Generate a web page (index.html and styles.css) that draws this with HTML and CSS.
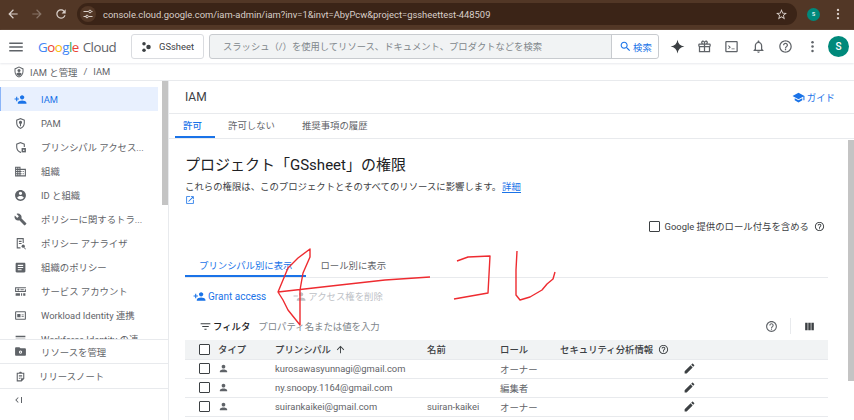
FILE: index.html
```html
<!DOCTYPE html>
<html lang="ja">
<head>
    <meta charset="UTF-8">
    <title>IAM</title>
    <link rel="stylesheet" href="styles.css">
</head>
<body>
    <svg class="sprite" width="0" height="0">
        <symbol id="i-back" viewBox="0 0 24 24"><path d="M20 11H7.83l5.59-5.59L12 4l-8 8 8 8 1.41-1.41L7.83 13H20v-2z"/></symbol>
        <symbol id="i-forward" viewBox="0 0 24 24"><path d="M12 4l-1.41 1.41L16.17 11H4v2h12.17l-5.58 5.59L12 20l8-8z"/></symbol>
        <symbol id="i-refresh" viewBox="0 0 24 24"><path d="M17.65 6.35C16.2 4.9 14.35 4 12 4c-4.42 0-7.99 3.58-7.99 8s3.57 8 7.99 8c3.73 0 6.84-2.55 7.73-6h-2.08c-.82 2.33-3.04 4-5.65 4-3.31 0-6-2.69-6-6s2.69-6 6-6c1.66 0 3.14.69 4.22 1.78L13 11h7V4l-2.35 2.35z"/></symbol>
        <symbol id="i-tune" viewBox="0 0 24 24"><path d="M3 6h10v2H3zM3 16h6v2H3zM13 16h8v2h-8zM19 6h2v2h-2z"/><circle cx="16" cy="7" r="2.6" fill="none" stroke="currentColor" stroke-width="2"/><circle cx="10" cy="17" r="2.6" fill="none" stroke="currentColor" stroke-width="2"/></symbol>
        <symbol id="i-star" viewBox="0 0 24 24"><path d="M22 9.24l-7.19-.62L12 2 9.19 8.63 2 9.24l5.46 4.73L5.82 21 12 17.27 18.18 21l-1.64-7.03L22 9.24zM12 15.4l-3.76 2.27 1-4.28-3.32-2.88 4.38-.38L12 6.1l1.71 4.04 4.38.38-3.32 2.88 1 4.28L12 15.4z"/></symbol>
        <symbol id="i-more" viewBox="0 0 24 24"><circle cx="12" cy="5" r="2"/><circle cx="12" cy="12" r="2"/><circle cx="12" cy="19" r="2"/></symbol>
        <symbol id="i-menu" viewBox="0 0 24 24"><path d="M3 18h18v-2H3v2zm0-5h18v-2H3v2zm0-7v2h18V6H3z"/></symbol>
        <symbol id="i-hub" viewBox="0 0 24 24"><circle cx="8" cy="5.5" r="3.5"/><circle cx="8" cy="18.5" r="3.5"/><circle cx="17" cy="12" r="4.5"/></symbol>
        <symbol id="i-search" viewBox="0 0 24 24"><path d="M15.5 14h-.79l-.28-.27C15.41 12.59 16 11.11 16 9.5 16 5.91 13.09 3 9.5 3S3 5.91 3 9.5 5.91 16 9.5 16c1.61 0 3.09-.59 4.23-1.57l.27.28v.79l5 4.99L20.49 19l-4.99-5zm-6 0C7.01 14 5 11.99 5 9.5S7.01 5 9.5 5 14 7.01 14 9.5 11.99 14 9.5 14z"/></symbol>
        <symbol id="i-spark" viewBox="0 0 24 24"><path d="M12 1c1 6.5 4.5 10 11 11-6.500 1-10 4.500-11 11-1-6.500-4.500-10-11-11 6.500-1 10-4.500 11-11z"/></symbol>
        <symbol id="i-gift" viewBox="0 0 24 24"><path d="M20 7h-3.200c.5-.6.700-1.300.6-2-.2-1.500-1.500-2.500-3-2.500-.9 0-1.800.5-2.400 1.300-.6-.8-1.500-1.300-2.400-1.300-1.500 0-2.800 1-3 2.500-.1.700.1 1.400.6 2H4c-1.100 0-2 .9-2 2v3h1v9h18v-9h1V9c0-1.100-.9-2-2-2zm-6-2.500c.6 0 1.300.4 1.400 1 .1.800-.5 1.500-1.400 1.500h-1V6c0-.9.400-1.500 1-1.500zM8.600 5.500c.1-.6.800-1 1.400-1 .6 0 1 .6 1 1.500v1h-1c-.9 0-1.500-.7-1.400-1.500zM4 9h7v2H4V9zm1 4h6v6H5v-6zm14 6h-6v-6h6v6zm1-8h-7V9h7v2z"/></symbol>
        <symbol id="i-terminal" viewBox="0 0 24 24"><path d="M20 3H4c-1.100 0-2 .9-2 2v14c0 1.100.9 2 2 2h16c1.100 0 2-.9 2-2V5c0-1.100-.9-2-2-2zm0 16H4V5h16v14z"/><path d="M7.500 10l3.500 3-3.500 3-1-1 2.200-2-2.200-2zM12 15h5v1.500h-5z"/></symbol>
        <symbol id="i-bell" viewBox="0 0 24 24"><path d="M12 22c1.100 0 2-.9 2-2h-4c0 1.100.9 2 2 2zm6-6v-5c0-3.070-1.630-5.640-4.500-6.320V4c0-.83-.67-1.500-1.500-1.500s-1.500.67-1.500 1.500v.68C7.640 5.360 6 7.920 6 11v5l-2 2v1h16v-1l-2-2zm-2 1H8v-6c0-2.480 1.510-4.500 4-4.500s4 2.020 4 4.500v6z"/></symbol>
        <symbol id="i-help" viewBox="0 0 24 24"><path d="M11 18h2v-2h-2v2zm1-16C6.480 2 2 6.480 2 12s4.480 10 10 10 10-4.480 10-10S17.520 2 12 2zm0 18c-4.410 0-8-3.590-8-8s3.590-8 8-8 8 3.590 8 8-3.590 8-8 8zm0-14c-2.210 0-4 1.790-4 4h2c0-1.100.9-2 2-2s2 .9 2 2c0 2-3 1.750-3 5h2c0-2.250 3-2.500 3-5 0-2.210-1.790-4-4-4z"/></symbol>
        <symbol id="i-shield" viewBox="0 0 24 24"><path d="M12 1L3 5v6c0 5.550 3.840 10.740 9 12 5.160-1.260 9-6.450 9-12V5l-9-4zm7 10c0 4.520-2.980 8.690-7 9.930-4.020-1.240-7-5.410-7-9.930V6.300l7-3.110 7 3.110V11z"/><circle cx="12" cy="9" r="3"/><path d="M6.500 16c1-2 3.500-3 5.500-3s4.500 1 5.500 3c-1.300 2-3.300 3.400-5.500 4-2.200-.6-4.200-2-5.500-4z"/></symbol>
        <symbol id="i-person-add" viewBox="0 0 24 24"><path d="M15 12c2.210 0 4-1.790 4-4s-1.790-4-4-4-4 1.790-4 4 1.790 4 4 4zm-9-2V7H4v3H1v2h3v3h2v-3h3v-2H6zm9 4c-2.670 0-8 1.340-8 4v2h16v-2c0-2.660-5.330-4-8-4z"/></symbol>
        <symbol id="i-person-remove" viewBox="0 0 24 24"><path d="M15 12c2.210 0 4-1.790 4-4s-1.790-4-4-4-4 1.790-4 4 1.790 4 4 4zM1 10v2h8v-2H1zm14 4c-2.670 0-8 1.340-8 4v2h16v-2c0-2.660-5.330-4-8-4z"/></symbol>
        <symbol id="i-person" viewBox="0 0 24 24"><path d="M12 12c2.210 0 4-1.790 4-4s-1.790-4-4-4-4 1.790-4 4 1.790 4 4 4zm0 2c-2.670 0-8 1.340-8 4v2h16v-2c0-2.660-5.330-4-8-4z"/></symbol>
        <symbol id="i-pam" viewBox="0 0 24 24"><path d="M12 2L4 5v6c0 5 3.400 9.700 8 11 4.600-1.300 8-6 8-11V5l-8-3zm6 9c0 4-2.500 7.600-6 8.900C8.500 18.600 6 15 6 11V6.400l6-2.200 6 2.200V11z"/><path d="M12 7a3 3 0 0 0-1 5.800V17h2v-4.200A3 3 0 0 0 12 7z"/></symbol>
        <symbol id="i-access" viewBox="0 0 24 24"><path d="M12 2L4 5v6c0 5 3.400 9.700 8 11l1-.3v-2.100l-1 .3C8.500 18.600 6 15 6 11V6.400l6-2.200 6 2.200V11h2V5l-8-3z"/><path d="M14 13h8v8h-8z"/><circle cx="18" cy="17" r="1.500" fill="#fff"/></symbol>
        <symbol id="i-domain" viewBox="0 0 24 24"><path d="M12 7V3H2v18h20V7H12zM6 19H4v-2h2v2zm0-4H4v-2h2v2zm0-4H4V9h2v2zm0-4H4V5h2v2zm4 12H8v-2h2v2zm0-4H8v-2h2v2zm0-4H8V9h2v2zm0-4H8V5h2v2zm10 12h-8v-2h2v-2h-2v-2h2v-2h-2V9h8v10zm-2-8h-2v2h2v-2zm0 4h-2v2h2v-2z"/></symbol>
        <symbol id="i-account" viewBox="0 0 24 24"><path d="M12 2C6.480 2 2 6.480 2 12s4.480 10 10 10 10-4.480 10-10S17.520 2 12 2zm0 3c1.660 0 3 1.340 3 3s-1.340 3-3 3-3-1.340-3-3 1.340-3 3-3zm0 14.200c-2.500 0-4.710-1.280-6-3.220.03-1.990 4-3.080 6-3.080 1.990 0 5.970 1.090 6 3.080-1.290 1.940-3.500 3.220-6 3.220z"/></symbol>
        <symbol id="i-wrench" viewBox="0 0 24 24"><path d="M22.700 19l-9.100-9.100c.9-2.300.4-5-1.500-6.900-2-2-5-2.400-7.400-1.300L9 6 6 9 1.600 4.700C.4 7.100.9 10.100 2.900 12.100c1.900 1.900 4.600 2.400 6.900 1.500l9.100 9.100c.4.400 1 .4 1.400 0l2.300-2.300c.5-.4.5-1.100.1-1.400z"/></symbol>
        <symbol id="i-analyzer" viewBox="0 0 24 24"><path d="M5 2h13v9h-2V4H7v15h5v2H5V2zM9 7h5v2H9zM9 11h5v2H9z"/><circle cx="17" cy="17" r="3"/><path d="M19 19l3 3-1 1-3-3z"/></symbol>
        <symbol id="i-article" viewBox="0 0 24 24"><path d="M19 3H5c-1.100 0-2 .9-2 2v14c0 1.100.9 2 2 2h14c1.100 0 2-.9 2-2V5c0-1.100-.9-2-2-2zm-5 14H7v-2h7v2zm3-4H7v-2h10v2zm0-4H7V7h10v2z"/></symbol>
        <symbol id="i-service" viewBox="0 0 24 24"><path d="M2 4h20v2H4v5h16V8h2v5H2V4z"/><circle cx="8" cy="8.500" r="2"/><path d="M12 8h6v1.500h-6zM3 15h8v5H3zM13 15h2v5h-2zM17 15h4v5h-4z"/></symbol>
        <symbol id="i-workload" viewBox="0 0 24 24"><path d="M20 4H4c-1.100 0-2 .9-2 2v12c0 1.100.9 2 2 2h16c1.100 0 2-.9 2-2V6c0-1.100-.9-2-2-2zm0 14H4V6h16v12z"/><path d="M6 9h6v6H6zM14 10h4v1.500h-4zM14 13h4v1.500h-4z"/></symbol>
        <symbol id="i-list" viewBox="0 0 24 24"><path d="M3 5h18v3H3zM3 10.500h18v3H3zM3 16h18v3H3z"/></symbol>
        <symbol id="i-folder" viewBox="0 0 24 24"><path d="M20 6h-8l-2-2H4c-1.100 0-2 .9-2 2v12c0 1.100.9 2 2 2h16c1.100 0 2-.9 2-2V8c0-1.100-.9-2-2-2z"/><circle cx="12" cy="13" r="3" fill="#fff"/><circle cx="12" cy="13" r="1.200"/></symbol>
        <symbol id="i-notes" viewBox="0 0 24 24"><path d="M19 5h-4.200C14.400 3.800 13.300 3 12 3s-2.400.8-2.800 2H5v16h9l5-5V5zM7 19V7h10v8h-4v4H7z"/><path d="M9 9h6v1.500H9zM9 12h6v1.500H9zM9 15h3v1.500H9z"/></symbol>
        <symbol id="i-collapse" viewBox="0 0 24 24"><path d="M10 6.500L4.500 12l5.500 5.500 1.200-1.200L7 12l4.200-4.300zM16 6h2v12h-2z"/></symbol>
        <symbol id="i-school" viewBox="0 0 24 24"><path d="M5 13.180v4L12 21l7-3.820v-4L12 17l-7-3.820zM12 3L1 9l11 6 9-4.910V17h2V9L12 3z"/></symbol>
        <symbol id="i-open" viewBox="0 0 24 24"><path d="M19 19H5V5h7V3H3v18h18v-9h-2v7zM14 3v2h3.590l-9.830 9.830 1.410 1.410L19 6.410V10h2V3h-7z"/></symbol>
        <symbol id="i-filter" viewBox="0 0 24 24"><path d="M10 18h4v-2h-4v2zM3 6v2h18V6H3zm3 7h12v-2H6v2z"/></symbol>
        <symbol id="i-columns" viewBox="0 0 24 24"><path d="M4 5h4.500v14H4zM9.750 5h4.500v14h-4.500zM15.500 5H20v14h-4.500z"/></symbol>
        <symbol id="i-up" viewBox="0 0 24 24"><path d="M4 12l1.410 1.410L11 7.830V20h2V7.830l5.580 5.590L20 12l-8-8-8 8z"/></symbol>
        <symbol id="i-edit" viewBox="0 0 24 24"><path d="M3 17.250V21h3.750L17.810 9.940l-3.750-3.750L3 17.250zM20.710 7.040c.39-.39.39-1.020 0-1.410l-2.340-2.340c-.39-.39-1.020-.39-1.410 0l-1.830 1.830 3.750 3.750 1.830-1.830z"/></symbol>
    </svg>

    <div class="browser-bar">
        <svg class="ic ic-14 chrome-ic"><use href="#i-back"/></svg>
        <svg class="ic ic-14 chrome-ic dim"><use href="#i-forward"/></svg>
        <svg class="ic ic-14 chrome-ic"><use href="#i-refresh"/></svg>
        <div class="url-pill">
            <span class="url-tune"><svg class="ic ic-12"><use href="#i-tune"/></svg></span>
            <span class="url-text">console.cloud.google.com/iam-admin/iam?inv=1&amp;invt=AbyPcw&amp;project=gssheettest-448509</span>
            <svg class="ic ic-13 url-star"><use href="#i-star"/></svg>
        </div>
        <span class="profile-dot">s</span>
        <svg class="ic ic-14 chrome-more"><use href="#i-more"/></svg>
    </div>

    <header class="topbar">
        <svg class="ic ic-16 menu-ic"><use href="#i-menu"/></svg>
        <div class="logo"><span class="g-blue">G</span><span class="g-red">o</span><span class="g-yellow">o</span><span class="g-blue">g</span><span class="g-green">l</span><span class="g-red">e</span><span class="logo-cloud">Cloud</span></div>
        <button class="project-btn"><svg class="ic ic-12"><use href="#i-hub"/></svg>GSsheet</button>
        <div class="searchbox">
            <span class="search-hint">スラッシュ（/）を使用してリソース、ドキュメント、プロダクトなどを検索</span>
            <span class="search-btn"><svg class="ic ic-13"><use href="#i-search"/></svg>検索</span>
        </div>
        <div class="top-icons">
            <svg class="ic ic-15 spark"><use href="#i-spark"/></svg>
            <svg class="ic ic-15"><use href="#i-gift"/></svg>
            <svg class="ic ic-15"><use href="#i-terminal"/></svg>
            <svg class="ic ic-15"><use href="#i-bell"/></svg>
            <svg class="ic ic-15"><use href="#i-help"/></svg>
            <svg class="ic ic-15"><use href="#i-more"/></svg>
        </div>
        <span class="avatar">S</span>
    </header>

    <div class="crumbs">
        <svg class="ic ic-12"><use href="#i-shield"/></svg>
        <span>IAM と管理</span><span class="crumb-sep">/</span><span>IAM</span>
    </div>

    <div class="app">
        <aside class="sidebar">
            <nav class="nav">
                <div class="nav-thumb"></div>
                <a class="nav-item active"><svg class="ic ic-13"><use href="#i-person-add"/></svg>IAM</a>
                <a class="nav-item"><svg class="ic ic-13"><use href="#i-pam"/></svg>PAM</a>
                <a class="nav-item"><svg class="ic ic-13"><use href="#i-access"/></svg>プリンシパル アクセス...</a>
                <a class="nav-item"><svg class="ic ic-13"><use href="#i-domain"/></svg>組織</a>
                <a class="nav-item"><svg class="ic ic-13"><use href="#i-account"/></svg>ID と組織</a>
                <a class="nav-item"><svg class="ic ic-13"><use href="#i-wrench"/></svg>ポリシーに関するトラ...</a>
                <a class="nav-item"><svg class="ic ic-13"><use href="#i-analyzer"/></svg>ポリシー アナライザ</a>
                <a class="nav-item"><svg class="ic ic-13"><use href="#i-article"/></svg>組織のポリシー</a>
                <a class="nav-item"><svg class="ic ic-13"><use href="#i-service"/></svg>サービス アカウント</a>
                <a class="nav-item"><svg class="ic ic-13"><use href="#i-workload"/></svg>Workload Identity 連携</a>
                <a class="nav-item"><svg class="ic ic-13"><use href="#i-list"/></svg>Workforce Identity の連</a>
            </nav>
            <a class="side-foot"><svg class="ic ic-13"><use href="#i-folder"/></svg>リソースを管理</a>
            <a class="side-foot notes"><svg class="ic ic-13"><use href="#i-notes"/></svg>リリースノート</a>
            <a class="side-collapse"><svg class="ic ic-12"><use href="#i-collapse"/></svg></a>
        </aside>

        <main class="content">
            <div class="page-head">
                <span>IAM</span>
                <a class="guide"><svg class="ic ic-13"><use href="#i-school"/></svg>ガイド</a>
            </div>
            <div class="tabs">
                <a class="tab active">許可</a>
                <a class="tab">許可しない</a>
                <a class="tab">推奨事項の履歴</a>
            </div>
            <div class="body-scroll">
                <div class="page-scroll"></div>
                <h1>プロジェクト「GSsheet」の権限</h1>
                <p class="desc">これらの権限は、このプロジェクトとそのすべてのリソースに影響します。<a>詳細</a><br><svg class="ic ic-10 link-ic"><use href="#i-open"/></svg></p>
                <div class="include-row">
                    <span class="checkbox"></span>
                    <span>Google 提供のロール付与を含める</span>
                    <svg class="ic ic-11"><use href="#i-help"/></svg>
                </div>
                <div class="view-tabs">
                    <a class="view-tab active">プリンシパル別に表示</a>
                    <a class="view-tab">ロール別に表示</a>
                </div>
                <div class="actions">
                    <a class="action"><svg class="ic ic-13"><use href="#i-person-add"/></svg>Grant access</a>
                    <a class="action off"><svg class="ic ic-13"><use href="#i-person-remove"/></svg>アクセス権を削除</a>
                </div>
                <div class="filter-row">
                    <svg class="ic ic-13"><use href="#i-filter"/></svg>
                    <b>フィルタ</b>
                    <span class="filter-hint">プロパティ名または値を入力</span>
                    <svg class="ic ic-13 filter-help"><use href="#i-help"/></svg>
                    <span class="filter-div"></span>
                    <svg class="ic ic-13"><use href="#i-columns"/></svg>
                </div>
                <table class="grid">
                    <tr>
                        <th class="c-check"><span class="checkbox"></span></th>
                        <th class="c-type">タイプ</th>
                        <th class="c-principal">プリンシパル <svg class="ic ic-11 sort"><use href="#i-up"/></svg></th>
                        <th class="c-name">名前</th>
                        <th class="c-role">ロール</th>
                        <th class="c-sec">セキュリティ分析情報 <svg class="ic ic-11 sort"><use href="#i-help"/></svg></th>
                        <th class="c-edit"></th>
                    </tr>
                    <tr>
                        <td><span class="checkbox"></span></td>
                        <td><svg class="ic ic-11"><use href="#i-person"/></svg></td>
                        <td>kurosawasyunnagi@gmail.com</td>
                        <td></td>
                        <td>オーナー</td>
                        <td></td>
                        <td><svg class="ic ic-13"><use href="#i-edit"/></svg></td>
                    </tr>
                    <tr>
                        <td><span class="checkbox"></span></td>
                        <td><svg class="ic ic-11"><use href="#i-person"/></svg></td>
                        <td>ny.snoopy.1164@gmail.com</td>
                        <td></td>
                        <td>編集者</td>
                        <td></td>
                        <td><svg class="ic ic-13"><use href="#i-edit"/></svg></td>
                    </tr>
                    <tr>
                        <td><span class="checkbox"></span></td>
                        <td><svg class="ic ic-11"><use href="#i-person"/></svg></td>
                        <td>suirankaikei@gmail.com</td>
                        <td>suiran-kaikei</td>
                        <td>オーナー</td>
                        <td></td>
                        <td><svg class="ic ic-13"><use href="#i-edit"/></svg></td>
                    </tr>
                </table>
            </div>
        </main>
    </div>

    <!-- red pen scribble on top of the screenshot -->
    <svg class="scribble" viewBox="0 0 854 420">
        <path d="M430 277L385 280L340 285L278 292L288 268L298 258L310 249L310 257L303 273L300 290L300 325L288 310L283 300L278 292"/>
        <path d="M457 261L468 257L490 256L488 293L454 299"/>
        <path d="M517 251L516 270L516 295L520 300L530 297L542 290L547 284L553 279L555 272"/>
    </svg>
</body>
</html>
```

FILE: styles.css
```css
* {
    box-sizing: border-box;
}
html, body {
    height: 100%;
}
body {
    margin: 0;
    height: 420px;
    overflow: hidden;
    display: flex;
    flex-direction: column;
    position: relative;
    background: #fff;
    color: #3c4043;
    font-family: Roboto, "Noto Sans CJK JP", sans-serif;
    font-size: 9.4px;
}
a {
    color: inherit;
    text-decoration: none;
}
.sprite {
    position: absolute;
}
.ic {
    fill: currentColor;
    flex: none;
}
.ic-10 { width: 10px; height: 10px; }
.ic-11 { width: 11px; height: 11px; }
.ic-12 { width: 12px; height: 12px; }
.ic-13 { width: 13px; height: 13px; }
.ic-14 { width: 14px; height: 14px; }
.ic-15 { width: 15px; height: 15px; }
.ic-16 { width: 18px; height: 18px; }

/* browser chrome */
.browser-bar {
    height: 30px;
    flex: none;
    display: flex;
    align-items: center;
    padding: 0 0 0 6px;
    background: #523726;
    color: #d9cfc9;
}
.chrome-ic {
    margin: -2px 10px 0 0;
}
.chrome-ic.dim {
    opacity: 0.4;
}
.url-pill {
    width: 720px;
    height: 22px;
    margin: -2px 0 0 -1px;
    display: flex;
    align-items: center;
    padding: 0 9px 0 3px;
    border-radius: 11px;
    background: #3b2417;
    font-size: 9.4px;
}
.url-tune {
    width: 16px;
    height: 16px;
    margin-right: 7px;
    display: flex;
    align-items: center;
    justify-content: center;
    border-radius: 50%;
    background: #523726;
}
.url-text {
    flex: 1;
    white-space: nowrap;
}
.profile-dot {
    width: 13px;
    height: 13px;
    margin: -2px 0 0 10px;
    border-radius: 50%;
    background: #00897b;
    color: #fff;
    font-size: 7px;
    line-height: 13px;
    text-align: center;
}
.chrome-more {
    margin: -2px 0 0 11px;
}

/* console header */
.topbar {
    height: 33px;
    flex: none;
    display: flex;
    align-items: center;
    padding-left: 7px;
    box-shadow: 0 1px 2px #e8eaed;
    color: #5f6368;
}
.menu-ic {
    color: #5f6368;
}
.logo {
    width: 93px;
    margin-left: 13px;
    font-family: "Open Sans", sans-serif;
    font-size: 13.3px;
    letter-spacing: -0.5px;
    white-space: nowrap;
}
.g-blue { color: #4285f4; }
.g-red { color: #ea4335; }
.g-yellow { color: #fbbc04; }
.g-green { color: #34a853; }
.logo-cloud {
    margin-left: 4px;
    color: #5f6368;
}
.project-btn {
    width: 73px;
    height: 25px;
    display: flex;
    align-items: center;
    gap: 7px;
    padding: 0 0 0 8px;
    border: 1px solid #dadce0;
    border-radius: 3px;
    background: #fff;
    color: #3c4043;
    font: 9.4px Roboto, sans-serif;
}
.searchbox {
    width: 450px;
    height: 25px;
    margin-left: 5px;
    display: flex;
    align-items: stretch;
    border: 1px solid #c8cbcf;
    border-radius: 3px;
    background: #f1f3f4;
    color: #80868b;
}
.search-hint {
    flex: 1;
    padding-left: 13px;
    line-height: 23px;
    font-size: 9.3px;
    white-space: nowrap;
}
.search-btn {
    width: 47px;
    display: flex;
    align-items: center;
    gap: 1px;
    padding-left: 7px;
    border-left: 1px solid #c8cbcf;
    border-radius: 0 3px 3px 0;
    background: #fff;
    color: #1a73e8;
}
.top-icons {
    margin-left: 11px;
    display: flex;
    align-items: center;
    gap: 12px;
}
.spark {
    color: #3c4043;
}
.avatar {
    width: 21px;
    height: 21px;
    margin-left: 8px;
    border-radius: 50%;
    background: #00897b;
    color: #fff;
    font-size: 10px;
    font-weight: 500;
    line-height: 21px;
    text-align: center;
}

.crumbs {
    height: 18px;
    flex: none;
    display: flex;
    align-items: center;
    gap: 5px;
    padding-left: 13px;
    border-bottom: 1px solid #e8eaed;
    color: #5f6368;
}
.crumb-sep {
    margin: 0 1px;
}

/* layout */
.app {
    flex: 1;
    min-height: 0;
    display: flex;
}

/* left nav */
.sidebar {
    width: 169px;
    flex: none;
    display: flex;
    flex-direction: column;
    border-right: 1px solid #e8eaed;
    color: #5f6368;
}
.nav {
    position: relative;
    height: 259px;
    flex: none;
    overflow: hidden;
    padding-top: 6px;
    border-bottom: 1px solid #e8eaed;
}
.nav-thumb {
    position: absolute;
    top: 0;
    right: 0;
    width: 6px;
    height: 124px;
    background: #c4c4c4;
}
.nav-item {
    height: 24px;
    margin-right: 10px;
    display: flex;
    align-items: center;
    gap: 14px;
    padding-left: 14px;
    white-space: nowrap;
}
.nav-item.active {
    border-left: 1px solid #8ab4f8;
    padding-left: 13px;
    background: #e8f0fe;
    color: #1a73e8;
}
.side-foot {
    height: 24px;
    flex: none;
    display: flex;
    align-items: center;
    gap: 14px;
    padding-left: 14px;
    border-bottom: 1px solid #e8eaed;
}
.side-foot.notes {
    gap: 12px;
    height: 25px;
}
.side-collapse {
    flex: 1;
    display: flex;
    align-items: center;
    padding: 0 0 10px 13px;
}

/* main panel */
.content {
    flex: 1;
    min-width: 0;
    display: flex;
    flex-direction: column;
}
.page-head {
    height: 33px;
    flex: none;
    display: flex;
    align-items: center;
    justify-content: space-between;
    padding: 0 19px 0 16px;
    border-bottom: 1px solid #e8eaed;
    font-size: 12px;
}
.guide {
    display: flex;
    align-items: center;
    gap: 2px;
    color: #1a73e8;
    font-size: 9.4px;
}
.tabs {
    height: 25px;
    flex: none;
    display: flex;
    padding-left: 6px;
    border-bottom: 1px solid #e8eaed;
}
.tab {
    margin-right: 6px;
    padding: 0 7px;
    line-height: 24px;
    color: #5f6368;
}
.tab:first-child {
    width: 40px;
    padding: 0 8px;
}
.tab:nth-child(2) {
    margin-right: 13px;
}
.tab.active {
    border-bottom: 2px solid #1a73e8;
    color: #1a73e8;
    font-weight: 500;
}
.body-scroll {
    position: relative;
    flex: 1;
    min-height: 0;
    padding: 0 26px 0 16px;
    overflow: hidden;
}
.page-scroll {
    position: absolute;
    top: 1px;
    right: 0;
    width: 6px;
    height: 241px;
    background: #c4c4c4;
}
h1 {
    margin: 14px 0 0;
    font-size: 15px;
    font-weight: 400;
    line-height: 24px;
    color: #202124;
    white-space: nowrap;
}
.desc {
    margin: 3px 0 0;
    line-height: 14px;
    white-space: nowrap;
}
.desc a {
    margin-left: 1px;
    color: #1a73e8;
    border-bottom: 1px solid #1a73e8;
}
.link-ic {
    display: block;
    margin-top: 1px;
    color: #1a73e8;
}
.include-row {
    margin-top: 13px;
    display: flex;
    align-items: center;
    justify-content: flex-end;
    gap: 5px;
    height: 16px;
    padding-right: 3px;
}
.checkbox {
    display: block;
    width: 11px;
    height: 11px;
    border: 1.5px solid #3c4043;
    border-radius: 1px;
    background: #fff;
}
.view-tabs {
    margin-top: 20px;
    height: 24px;
    display: flex;
    border-bottom: 1px solid #e8eaed;
}
.view-tab {
    padding: 0 14px;
    line-height: 23px;
    color: #5f6368;
}
.view-tab.active {
    border-bottom: 2px solid #1a73e8;
    color: #1a73e8;
}
.actions {
    height: 36px;
    display: flex;
    align-items: center;
    gap: 27px;
    padding: 0 0 0 8px;
}
.action {
    display: flex;
    align-items: center;
    gap: 2px;
    color: #1a73e8;
    font-size: 10px;
}
.action.off {
    color: #bdc1c6;
    font-size: 9.4px;
}
.filter-row {
    height: 24px;
    display: flex;
    align-items: center;
    padding: 0 12px 0 14px;
    color: #3c4043;
}
.filter-row b {
    margin-left: 1px;
    font-weight: 500;
    color: #202124;
}
.filter-hint {
    flex: 1;
    margin-left: 8px;
    color: #80868b;
}
.filter-help {
    color: #5f6368;
}
.filter-div {
    width: 1px;
    height: 16px;
    margin: 0 12px;
    background: #e8eaed;
}
.grid {
    width: 643px;
    border-collapse: collapse;
    table-layout: fixed;
    margin-top: 2px;
}
.grid th, .grid td {
    height: 19px;
    padding: 0;
    border-bottom: 1px solid #e8eaed;
    text-align: left;
    white-space: nowrap;
    color: #5f6368;
}
.grid th {
    background: #f1f3f4;
    color: #3c4043;
    font-weight: 500;
}
.grid .ic {
    display: block;
}
.grid .ic.sort {
    display: inline-block;
    vertical-align: -2px;
    margin-left: 2px;
}
.grid td:nth-child(7) .ic {
    color: #3c4043;
}
.grid td:first-child, .grid th:first-child {
    padding-left: 14px;
}
.c-check { width: 33px; }
.c-type { width: 57px; }
.c-principal { width: 152px; }
.c-name { width: 73px; }
.c-role { width: 60px; }
.c-sec { width: 123px; }

.scribble {
    position: absolute;
    top: 0;
    left: 0;
    width: 854px;
    height: 420px;
    pointer-events: none;
    fill: none;
    stroke: #ee2b30;
    stroke-width: 1.4;
    stroke-linejoin: round;
}
```
